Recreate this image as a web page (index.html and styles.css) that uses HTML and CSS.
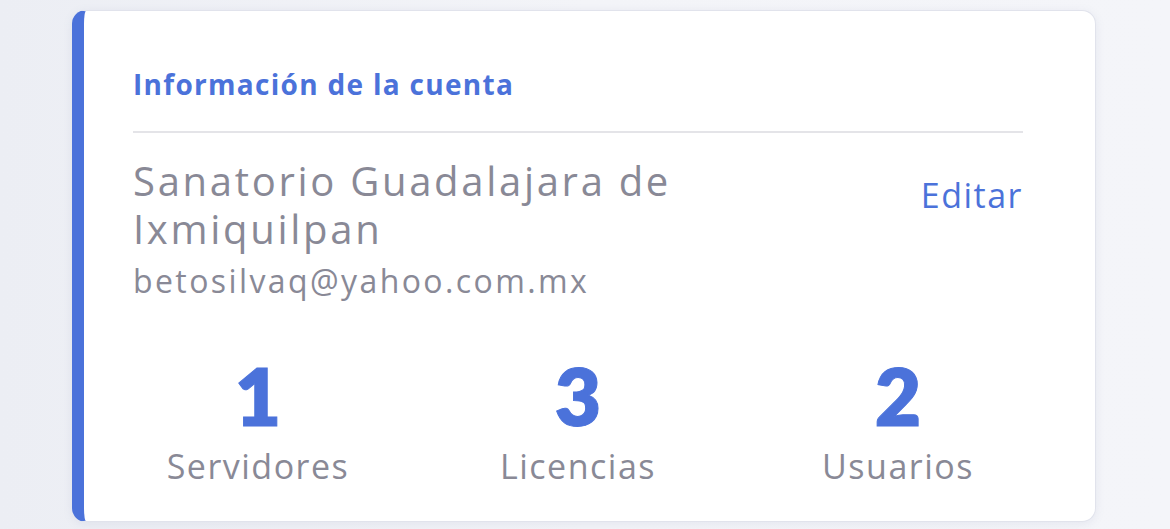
FILE: index.html
```html
<!DOCTYPE html>
<html lang="es">
<head>
<meta charset="utf-8">
<link rel="stylesheet" href="styles.css">
</head>
<body>
<div class="page">
  <section class="card">
    <h2 class="card-title">Información de la cuenta</h2>
    <div class="divider"></div>
    <div class="account-row">
      <div class="account-info">
        <div class="account-name">Sanatorio Guadalajara de Ixmiquilpan</div>
        <div class="account-email">betosilvaq@yahoo.com.mx</div>
      </div>
      <a class="edit-link">Editar</a>
    </div>
    <div class="stats">
      <div class="stat"><div class="stat-value">1</div><div class="stat-label">Servidores</div></div>
      <div class="stat"><div class="stat-value">3</div><div class="stat-label">Licencias</div></div>
      <div class="stat"><div class="stat-value">2</div><div class="stat-label">Usuarios</div></div>
    </div>
  </section>
</div>
</body>
</html>
```

FILE: styles.css
```css
* { box-sizing: border-box; }
html, body { margin: 0; padding: 0; }
body {
  width: 1170px;
  height: 529px;
  overflow: hidden;
  font-family: "Open Sans", "Noto Sans", sans-serif;
  background: linear-gradient(90deg, #eceef4 0%, #f3f4f8 50%, #f4f5f9 100%);
}
.page {
  padding: 10px 74px 7px 72px;
}
.card {
  background: #ffffff;
  border: 1px solid #e1e3ec;
  border-left: 12px solid #4b72da;
  border-radius: 14px;
  height: 512px;
  padding: 56px 72px 0 49px;
  box-shadow: 0 2px 10px rgba(120, 130, 170, 0.12);
}
.card-title {
  margin: 0;
  font-size: 28px;
  line-height: 34px;
  font-weight: 700;
  letter-spacing: 1.3px;
  color: #4b72da;
}
.divider {
  height: 2px;
  background: #e4e4e8;
  margin-top: 30px;
}
.account-row {
  display: flex;
  justify-content: space-between;
  align-items: flex-start;
  margin-top: 24px;
}
.account-info { max-width: 640px; }
.account-name {
  font-size: 40px;
  line-height: 48px;
  letter-spacing: 2.7px;
  color: #898996;
}
.account-email {
  margin-top: 8px;
  font-size: 32px;
  line-height: 40px;
  letter-spacing: 2.4px;
  color: #898996;
}
.edit-link {
  margin-top: 18px;
  font-size: 34px;
  line-height: 41px;
  letter-spacing: 1.5px;
  color: #4b72da;
}
.stats {
  display: flex;
  justify-content: center;
  margin: 46px -40px 0;
}
.stat {
  flex: 0 0 320px;
  display: flex;
  flex-direction: column;
  align-items: center;
}
.stat-value {
  font-family: "Lato", sans-serif;
  font-size: 80px;
  line-height: 96px;
  font-weight: 800;
  color: #4b72da;
  -webkit-text-stroke: 1px #4b72da;
}
.stat-label {
  margin-top: 3px;
  font-size: 34px;
  line-height: 40px;
  letter-spacing: 1.5px;
  color: #898996;
}
```
